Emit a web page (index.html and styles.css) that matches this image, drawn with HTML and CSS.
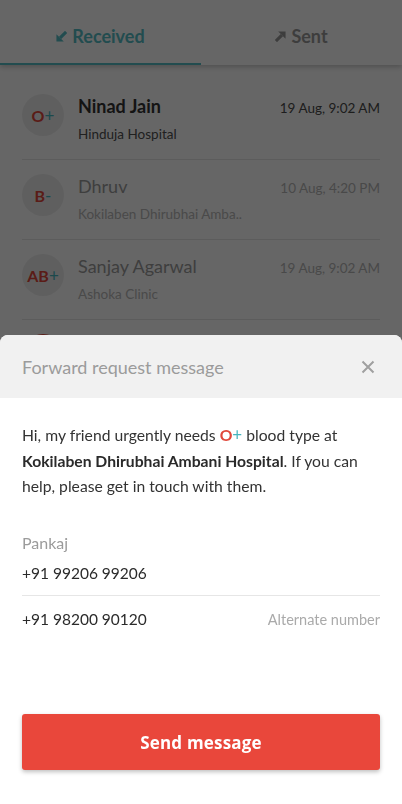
FILE: index.html
```html
<!DOCTYPE html>
<html lang="en">
<head>
<meta charset="utf-8">
<title>Requests</title>
<link rel="stylesheet" href="styles.css">
</head>
<body>
<div class="app">
  <nav class="tabs">
    <div class="tab tab-active">
      <svg class="tab-icon" viewBox="0 0 12 12"><path d="M11 1L4.5 7.5" stroke="currentColor" stroke-width="3.4" fill="none"/><path d="M0.5 3.5V11.5H8.5Z" fill="currentColor"/></svg>
      <span>Received</span>
    </div>
    <div class="tab">
      <svg class="tab-icon" viewBox="0 0 12 12"><path d="M1 11L7.5 4.5" stroke="currentColor" stroke-width="3.4" fill="none"/><path d="M3.5 0.5H11.5V8.5Z" fill="currentColor"/></svg>
      <span>Sent</span>
    </div>
  </nav>
  <ul class="list">
    <li class="row">
      <div class="avatar"><span class="grp">O</span><span class="sign">+</span></div>
      <div class="info">
        <div class="line"><span class="name name-new">Ninad Jain</span><span class="date date-new">19 Aug, 9:02 AM</span></div>
        <div class="sub sub-new">Hinduja Hospital</div>
      </div>
    </li>
    <li class="row">
      <div class="avatar"><span class="grp">B</span><span class="sign">-</span></div>
      <div class="info">
        <div class="line"><span class="name">Dhruv</span><span class="date">10 Aug, 4:20 PM</span></div>
        <div class="sub">Kokilaben Dhirubhai Amba..</div>
      </div>
    </li>
    <li class="row">
      <div class="avatar"><span class="grp">AB</span><span class="sign">+</span></div>
      <div class="info">
        <div class="line"><span class="name">Sanjay Agarwal</span><span class="date">19 Aug, 9:02 AM</span></div>
        <div class="sub">Ashoka Clinic</div>
      </div>
    </li>
    <li class="row">
      <div class="avatar avatar-urgent"><span class="grp-w">A</span><span class="sign-w">+</span></div>
      <div class="info">
        <div class="line"><span class="name">Meera Shah</span><span class="date">8 Aug, 1:15 PM</span></div>
        <div class="sub">Lilavati Hospital</div>
      </div>
    </li>
  </ul>
</div>

<div class="overlay"></div>

<section class="sheet">
  <header class="sheet-head">
    <h2 class="sheet-title">Forward request message</h2>
    <svg class="close" viewBox="0 0 14 14"><path d="M1.5 1.5L12.5 12.5M12.5 1.5L1.5 12.5" stroke="currentColor" stroke-width="2" fill="none"/></svg>
  </header>
  <div class="sheet-body">
    <p class="msg">Hi, my friend urgently needs <span class="bt"><span class="bt-grp">O</span><span class="bt-sign">+</span></span> blood type at <strong>Kokilaben Dhirubhai Ambani Hospital</strong>. If you can help, please get in touch with them.</p>
    <div class="contact">
      <div class="contact-name">Pankaj</div>
      <div class="phone phone-main">+91 99206 99206</div>
      <div class="phone phone-alt"><span>+91 98200 90120</span><span class="alt-label">Alternate number</span></div>
    </div>
    <button class="send">Send message</button>
  </div>
</section>
</body>
</html>
```

FILE: styles.css
```css
* { box-sizing: border-box; }
html, body { margin: 0; padding: 0; }
body {
  width: 402px;
  height: 804px;
  overflow: hidden;
  background: #ffffff;
  font-family: Lato, "Open Sans", "Liberation Sans", sans-serif;
  color: #333;
}

.app { background: #fff; }

.tabs {
  display: flex;
  height: 65px;
  background: #fff;
  box-shadow: 0 2px 5px rgba(0,0,0,0.22);
  position: relative;
}
.tab {
  flex: 1;
  display: flex;
  align-items: center;
  justify-content: center;
  gap: 5px;
  font-size: 18px;
  font-weight: 700;
  color: #9a9a9a;
  padding-top: 9px;
  border-bottom: 2px solid transparent;
}
.tab-active {
  color: #55bec6;
  border-bottom-color: #55bec6;
}
.tab-icon { width: 11px; height: 11px; margin-top: 1px; }

.list {
  list-style: none;
  margin: 0;
  padding: 15px 22px 0;
}
.row {
  display: flex;
  align-items: flex-start;
  gap: 14px;
  height: 80px;
  padding-top: 14px;
  border-bottom: 1px solid #e6e6e6;
}
.avatar {
  width: 42px;
  height: 42px;
  flex: none;
  border-radius: 50%;
  background: #eeeeee;
  display: flex;
  align-items: center;
  justify-content: center;
  font-size: 16px;
  font-weight: 700;
}
.avatar-urgent { background: #e04a3c; }
.grp { color: #e0483b; }
.sign { color: #46b6bf; font-weight: 400; font-size: 17px; }
.grp-w, .sign-w { color: #fff; }

.info { flex: 1; min-width: 0; }
.line {
  display: flex;
  justify-content: space-between;
  align-items: baseline;
  height: 24px;
  line-height: 24px;
}
.name { font-size: 18px; color: #9c9c9c; }
.name-new { font-weight: 700; color: #333; }
.date { font-size: 13.5px; color: #b6b6b6; }
.date-new { color: #4a4a4a; }
.sub {
  margin-top: 7px;
  font-size: 13.5px;
  line-height: 18px;
  color: #b8b8b8;
}
.sub-new { color: #505050; }

.overlay {
  position: fixed;
  inset: 0;
  background: rgba(0,0,0,0.6);
}

.sheet {
  position: fixed;
  left: 0;
  right: 0;
  bottom: 0;
  height: 469px;
  background: #fff;
  border-radius: 8px 8px 0 0;
  overflow: hidden;
  display: flex;
  flex-direction: column;
}
.sheet-head {
  height: 63px;
  flex: none;
  background: #f1f1f1;
  display: flex;
  align-items: center;
  justify-content: space-between;
  padding: 0 27px 0 22px;
}
.sheet-title {
  margin: 0;
  font-size: 18px;
  font-weight: 400;
  color: #9b9b9b;
}
.close { width: 14px; height: 14px; color: #a0a0a0; }

.sheet-body {
  flex: 1;
  display: flex;
  flex-direction: column;
  padding: 24px 22px 34px;
}
.msg {
  margin: 0;
  font-size: 15.7px;
  line-height: 25.5px;
  color: #333;
}
.msg strong { font-weight: 700; color: #2a2a2a; }
.bt { font-weight: 700; }
.bt-grp { color: #e0483b; }
.bt-sign { color: #46b6bf; font-weight: 400; font-size: 17px; }

.contact { margin-top: 33px; }
.contact-name {
  font-size: 16px;
  line-height: 20px;
  color: #9b9b9b;
}
.phone {
  font-size: 15.5px;
  line-height: 22px;
  color: #2b2b2b;
}
.phone-main {
  margin-top: 9px;
  padding-bottom: 11px;
  border-bottom: 1px solid #e6e6e6;
}
.phone-alt {
  margin-top: 12px;
  display: flex;
  justify-content: space-between;
  align-items: baseline;
}
.alt-label { font-size: 14.5px; color: #aaaaaa; }

.send {
  margin-top: auto;
  height: 56px;
  width: 100%;
  border: 0;
  border-radius: 3px;
  background: #e9473b;
  color: #fff;
  font-family: "Open Sans", "Liberation Sans", sans-serif;
  font-weight: 700;
  font-size: 17px;
  letter-spacing: 0.2px;
  box-shadow: 0 2px 4px rgba(0,0,0,0.25);
}
```
